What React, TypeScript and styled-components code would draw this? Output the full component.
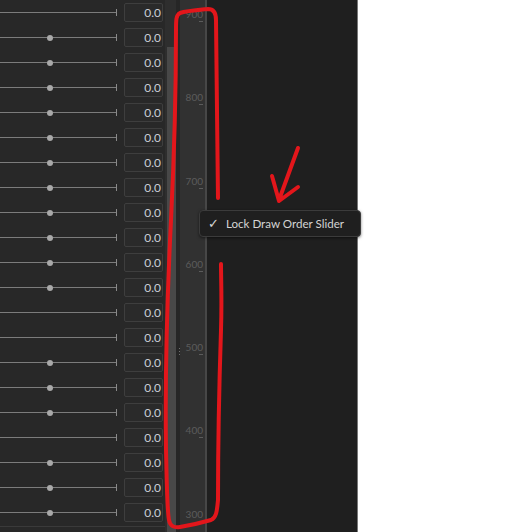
import React from "react";
import styled, { createGlobalStyle } from "styled-components";

const Global = createGlobalStyle`
  html, body { margin: 0; padding: 0; background: #ffffff; }
  body { font-family: Lato, "Noto Sans", sans-serif; }
`;

const Page = styled.div`
  position: relative;
  width: 531px;
  height: 532px;
  display: flex;
  overflow: hidden;
  background: #ffffff;
`;

const ListPanel = styled.div`
  width: 165px;
  flex: none;
  background: #282828;
  display: flex;
  flex-direction: column;
  overflow: hidden;
`;

const Row = styled.div`
  height: 25px;
  flex: none;
  display: flex;
  align-items: center;
`;

const ListFooter = styled.div`
  margin-top: 1px;
  height: 1px;
  flex: none;
  background: #3a3a3a;
`;

const SliderTrack = styled.div`
  width: 117px;
  display: flex;
  align-items: center;
  flex: none;
`;

const Seg = styled.div<{ $w?: number }>`
  height: 1px;
  background: #7c7c7c;
  ${(p) => (p.$w ? `width: ${p.$w}px; flex: none;` : `flex: 1;`)}
`;

const Knob = styled.div`
  width: 6px;
  height: 6px;
  border-radius: 50%;
  background: #a9a9a9;
  flex: none;
`;

const EndTick = styled.div`
  width: 1px;
  height: 7px;
  background: #8a8a8a;
  flex: none;
`;

const ValueBox = styled.div`
  margin-left: 7px;
  width: 39px;
  height: 19px;
  box-sizing: border-box;
  border: 1px solid #3e3e3e;
  border-radius: 2px;
  background: #2a2a2a;
  color: #c9ced6;
  font-family: Lato, "Noto Sans", sans-serif;
  font-size: 12px;
  line-height: 17px;
  text-align: right;
  padding-right: 1px;
`;

const Scrollbar = styled.div`
  width: 11px;
  flex: none;
  background: #2e2e2e;
  padding-top: 47px;
  display: flex;
  flex-direction: column;
  box-sizing: border-box;
`;

const Thumb = styled.div`
  flex: 1;
  margin-left: 2px;
  background: #484848;
`;

const Splitter = styled.div`
  width: 4px;
  flex: none;
  background: #262626;
  display: flex;
  flex-direction: column;
  align-items: flex-end;
  padding-top: 348px;
  gap: 2px;
  box-sizing: border-box;
`;

const GripDot = styled.div`
  width: 1px;
  height: 1px;
  background: #707070;
`;

const OrderTrack = styled.div`
  width: 25px;
  flex: none;
  background: #313131;
  border-right: 2px solid #474747;
  display: flex;
  flex-direction: column;
  padding-top: 9px;
  box-sizing: content-box;
`;

const TickItem = styled.div`
  height: 83.3px;
  flex: none;
  display: flex;
  flex-direction: column;
  align-items: flex-end;
  padding-right: 2px;
`;

const TickLabel = styled.div`
  font-family: Lato, "Noto Sans", sans-serif;
  font-size: 10px;
  line-height: 10px;
  color: #5c5c5c;
`;

const TickMark = styled.div`
  width: 4px;
  height: 1px;
  margin-top: 2px;
  background: #5c5c5c;
`;

const RightPanel = styled.div`
  width: 150px;
  flex: none;
  background: #1f1f1f;
  border-right: 1px solid #777777;
`;

const Blank = styled.div`
  flex: 1;
  background: #ffffff;
`;

const Tooltip = styled.div`
  position: absolute;
  left: 199px;
  top: 210px;
  width: 162px;
  height: 27px;
  box-sizing: border-box;
  background: #1f1f1f;
  border: 1px solid #3b3b3b;
  border-radius: 4px;
  box-shadow: 0 1px 3px rgba(0, 0, 0, 0.5);
  display: flex;
  align-items: center;
  padding-left: 8px;
  gap: 7px;
  color: #d4d4d4;
  font-family: Lato, "Noto Sans", sans-serif;
  font-size: 11.6px;
`;

const Check = styled.span`
  font-family: "DejaVu Sans", sans-serif;
  font-size: 13px;
  font-weight: bold;
  color: #d8d8d8;
`;

const Annotation = styled.svg`
  position: absolute;
  left: 0;
  top: 0;
  width: 531px;
  height: 532px;
  pointer-events: none;
`;

const noKnob = new Set([0, 12, 13, 17]);
const rows = Array.from({ length: 21 }, (_, i) => i);
const ticks = [900, 800, 700, 600, 500, 400, 300];

export default function App() {
  return (
    <>
      <Global />
      <Page>
        <ListPanel>
          {rows.map((i) => (
            <Row key={i}>
              <SliderTrack>
                {noKnob.has(i) ? (
                  <Seg />
                ) : (
                  <>
                    <Seg $w={47} />
                    <Knob />
                    <Seg />
                  </>
                )}
                <EndTick />
              </SliderTrack>
              <ValueBox>0.0</ValueBox>
            </Row>
          ))}
          <ListFooter />
        </ListPanel>
        <Scrollbar>
          <Thumb />
        </Scrollbar>
        <Splitter>
          <GripDot />
          <GripDot />
          <GripDot />
        </Splitter>
        <OrderTrack>
          {ticks.map((t) => (
            <TickItem key={t}>
              <TickLabel>{t}</TickLabel>
              <TickMark />
            </TickItem>
          ))}
        </OrderTrack>
        <RightPanel />
        <Blank />
        <Tooltip>
          <Check>✓</Check>
          <span>Lock Draw Order Slider</span>
        </Tooltip>
        <Annotation viewBox="0 0 531 532">
          <path
            d="M 218 198 C 217 140 217 60 216 20 C 216 12 213 9 208 9 C 198 10 186 11 180 13 C 176 15 176 20 176 30 C 176 90 175 140 171 220 C 167 300 165 380 166 450 C 167 490 167 510 169 520 C 170 526 174 528 180 527 C 192 525 204 522 211 520 C 216 518 217 512 218 500 C 218 450 219 390 221 330 C 222 300 221 280 221 264"
            fill="none"
            stroke="#e3161b"
            strokeWidth="4"
            strokeLinecap="round"
            strokeLinejoin="round"
          />
          <path
            d="M 298 148 L 279 200 M 272 176 L 279 201 L 298 187"
            fill="none"
            stroke="#e3161b"
            strokeWidth="4"
            strokeLinecap="round"
            strokeLinejoin="round"
          />
        </Annotation>
      </Page>
    </>
  );
}
